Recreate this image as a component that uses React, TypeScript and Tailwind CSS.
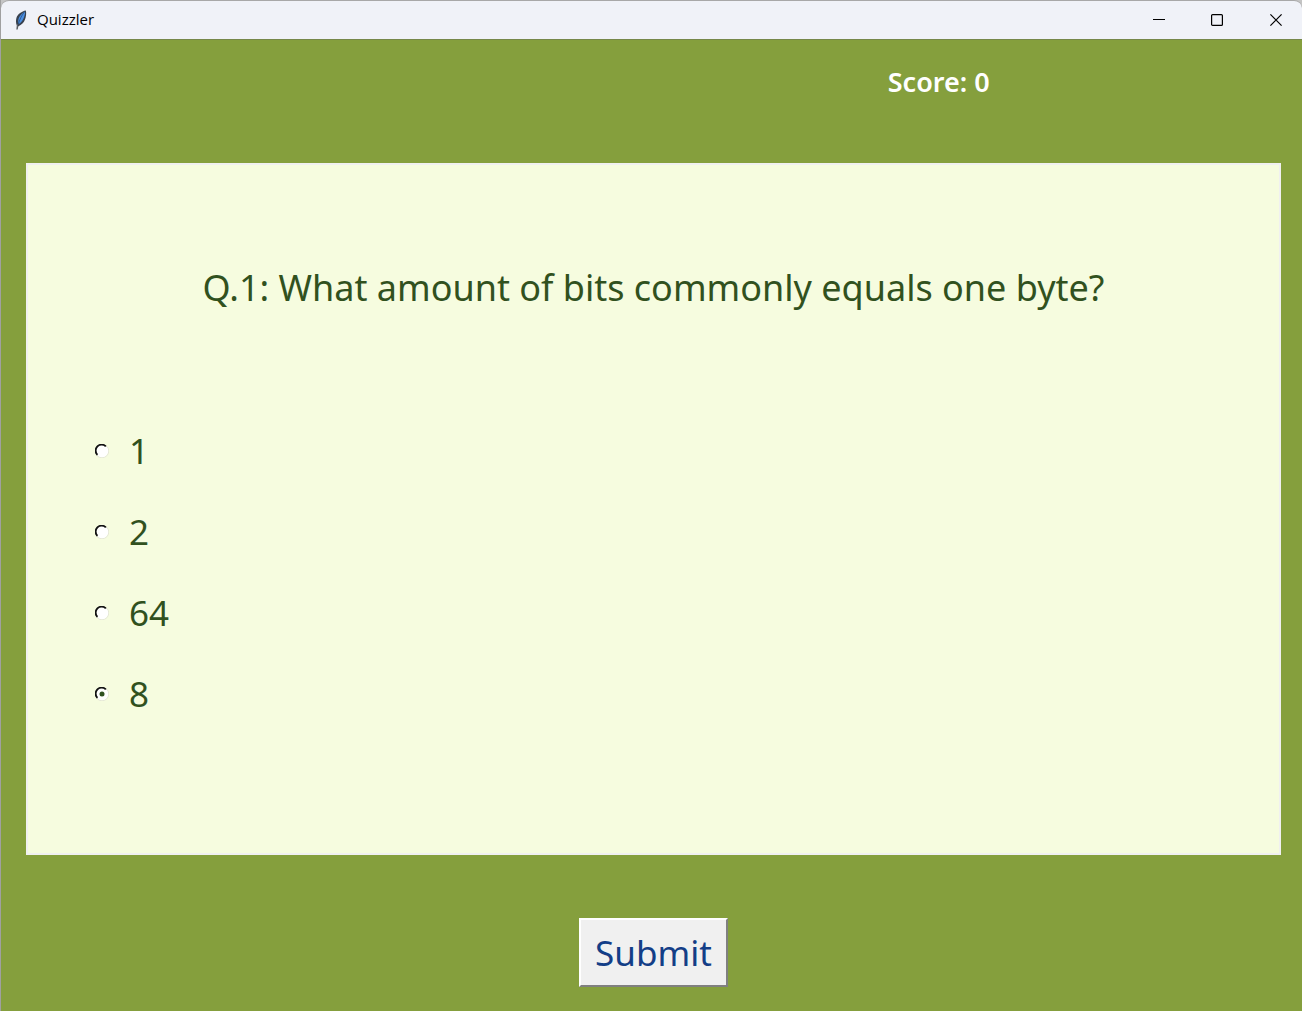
import { useState } from "react";

const options = ["1", "2", "64", "8"];

function FeatherIcon() {
  return (
    <svg viewBox="0 0 12 20" className="h-5 w-3" aria-hidden="true">
      <path d="M10.800.500C7 1.200 2.600 4 1.400 8c-.7 2.500-.5 5 .4 7.500L1.600 19.500l1-.2.800-3.100C6.500 15 9 12.500 10 9.500 11 7 11.600 3 10.800.500Z" fill="#39424f" />
      <path d="M10 1.500C7.200 3 4.300 6 3.500 9c-.4 1.800-.4 3.600-.1 5.200C6 12.800 8.200 10 9 7.200 9.700 5.200 10.300 3.500 10 1.500Z" fill="#4a8fe2" />
      <path d="M9.800 1.500C6.800 5 4.600 9.500 3 15" stroke="#1f3c66" strokeWidth="0.600" fill="none" />
      <path d="M2.800 14 2 19.500" stroke="#6b6b6b" strokeWidth="0.8" />
    </svg>
  );
}

function TitleBar() {
  return (
    <header className="flex h-10 items-center rounded-t-lg border-t border-b border-t-[#a8a8a8] border-b-[#76874a] bg-[#f0f2f8] pl-3.5 text-black">
      <FeatherIcon />
      <h1 className="ml-2.5 pb-0.5 font-['Open_Sans','Noto_Sans',sans-serif] text-[15px] leading-5">Quizzler</h1>
      <div className="-mr-1 ml-auto flex h-full">
        <button type="button" aria-label="Minimize" className="flex w-[58px] items-center justify-center">
          <svg viewBox="0 0 12 12" className="size-3" fill="none" stroke="currentColor">
            <path d="M0 5.500h12" />
          </svg>
        </button>
        <button type="button" aria-label="Maximize" className="flex w-[58px] items-center justify-center">
          <svg viewBox="0 0 12 12" className="size-3" fill="none" stroke="currentColor" strokeWidth="1.200">
            <rect x="0.600" y="0.600" width="10.800" height="10.800" rx="1" />
          </svg>
        </button>
        <button type="button" aria-label="Close" className="flex w-[60px] items-center justify-center">
          <svg viewBox="0 0 12 12" className="size-3" fill="none" stroke="currentColor" strokeWidth="1.200">
            <path d="m.4.4 11.200 11.200M11.600.4.4 11.600" />
          </svg>
        </button>
      </div>
    </header>
  );
}

function RadioMark({ checked }: { checked: boolean }) {
  return (
    <svg viewBox="0 0 14 14" className="pointer-events-none absolute inset-0 size-3.5" fill="none" aria-hidden="true">
      <circle cx="7" cy="7" r="6.300" fill="#fff" />
      <path d="M11.800 2.200A6.600 6.600 0 0 1 2.200 11.800" stroke="#e6e8d8" strokeWidth="1" />
      <path d="M2.200 11.400A6.500 6.500 0 0 1 11.400 2.200" stroke="#8c8f86" strokeWidth="1" />
      <path d="M2.400 10.800A5.700 5.700 0 0 1 10.800 2.400" stroke="#111" strokeWidth="1.800" />
      {checked && <circle cx="7" cy="7" r="2.500" fill="#2f5220" />}
    </svg>
  );
}

export default function App() {
  const [answer, setAnswer] = useState("8");

  return (
    <div className="flex min-h-screen flex-col border-l border-[#a0a0a0] bg-[#c4c4c4] font-['Noto_Sans',sans-serif]">
      <TitleBar />
      <form className="flex flex-1 flex-col bg-[#859f3d] pr-[21px] pb-6 pl-[25px]" onSubmit={(e) => e.preventDefault()}>
        <div className="grid grid-cols-[5fr_6fr] pt-6 pb-[63px]">
          <p className="col-start-2 text-center text-[27px] leading-9 font-semibold text-white">Score: 0</p>
        </div>
        <fieldset className="flex-1 border-2 border-[#f0f0f0] bg-[#f6fcdf] pt-[99px]">
          <h2 className="text-center text-[36px] leading-[48px] text-[#31511e]">
            Q.1: What amount of bits commonly equals one byte?
          </h2>
          <div className="mt-[115px] flex flex-col items-start gap-[33px] pl-[67px]">
            {options.map((option) => (
              <label key={option} className="flex items-center text-[35px] leading-[48px] text-[#31511e]">
                <span className="relative size-3.5">
                  <input
                    type="radio"
                    name="answer"
                    value={option}
                    checked={answer === option}
                    onChange={() => setAnswer(option)}
                    className="absolute inset-0 size-3.5 appearance-none"
                  />
                  <RadioMark checked={answer === option} />
                </span>
                <span className="ml-5">{option}</span>
              </label>
            ))}
          </div>
        </fieldset>
        <button
          type="submit"
          className="mt-[63px] self-center border-2 border-t-white border-r-[#808080] border-b-[#808080] border-l-white bg-[#f0f0f0] px-3.5 py-2 text-[35px] leading-[49px] text-[#133e87]"
        >
          Submit
        </button>
      </form>
    </div>
  );
}
